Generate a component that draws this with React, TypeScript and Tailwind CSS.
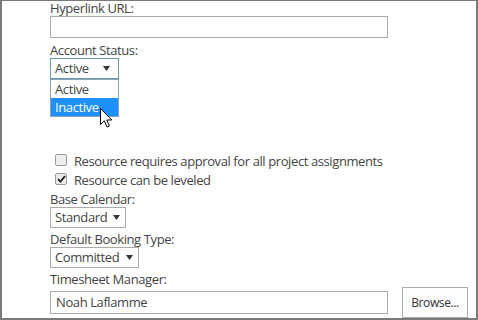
const Arrow = () => (
  <svg width="7" height="5" viewBox="0 0 7 5" className="shrink-0">
    <path d="M0 0 L7 0 L3.5 5 Z" fill="#333" />
  </svg>
);

function Select({ value, width }: { value: string; width: string }) {
  return (
    <div
      className={`flex items-center justify-between h-[21px] border border-[#ababab] bg-white pl-[4px] pr-[5px] ${width}`}
    >
      <span>{value}</span>
      <Arrow />
    </div>
  );
}

function Checkbox({ checked }: { checked?: boolean }) {
  return (
    <div className="mt-[1px] w-[12px] h-[12px] rounded-[2px] border border-[#9a9a9a] bg-[#ececec] flex items-center justify-center shrink-0">
      {checked && (
        <svg width="9" height="8" viewBox="0 0 9 8">
          <path d="M1 4.2 L3.4 6.6 L8 1.2" fill="none" stroke="#222" strokeWidth="1.9" />
        </svg>
      )}
    </div>
  );
}

export default function App() {
  return (
    <div className="w-[478px] h-[320px] bg-white border-x-2 border-b-2 border-t border-[#7a7a7a] overflow-hidden font-['Open_Sans',sans-serif] text-[13px] tracking-[-0.4px] text-[#444] leading-[15px]">
      <div className="pl-[48px] flex flex-col">
        <div className="h-[15px]">Hyperlink URL:</div>
        <div className="w-[338px] h-[22px] border border-[#ababab]" />

        <div className="mt-[5px] h-[15px]">Account Status:</div>
        <div className="relative w-[69px]">
          <div className="flex items-center justify-between h-[21px] border border-[#6f9aa5] bg-white pl-[4px] pr-[8px]">
            <span>Active</span>
            <Arrow />
          </div>
          <div className="absolute top-full left-0 w-[69px] h-[38px] border border-[#8aa3bd] bg-white flex flex-col z-10">
            <div className="h-[19px] pl-[4px] flex items-center">Active</div>
            <div className="h-[18px] pl-[4px] flex items-center bg-[#1e90ff] text-white">Inactive</div>
          </div>
          <svg
            className="absolute left-[50px] top-[50px] z-20"
            width="13"
            height="21"
            viewBox="0 0 13 21"
          >
            <path
              d="M0.5 0.5 L0.5 16.5 L4.3 12.8 L7 19 L9.4 18 L6.8 12 L11.8 12 Z"
              fill="#fff"
              stroke="#000"
              strokeWidth="1"
              strokeLinejoin="round"
            />
          </svg>
        </div>

        <div className="mt-[74px] h-[19px] flex items-start gap-[7px] pl-[5px]">
          <Checkbox />
          <span className="leading-[16px]">Resource requires approval for all project assignments</span>
        </div>
        <div className="h-[19px] flex items-start gap-[7px] pl-[5px]">
          <Checkbox checked />
          <span className="leading-[16px]">Resource can be leveled</span>
        </div>

        <div className="mt-[1px] h-[15px]">Base Calendar:</div>
        <Select value="Standard" width="w-[76px]" />

        <div className="mt-[4px] h-[15px]">Default Booking Type:</div>
        <Select value="Committed" width="w-[89px]" />

        <div className="mt-[4px] h-[15px]">Timesheet Manager:</div>
        <div className="flex items-center gap-[14px] h-[31px]">
          <div className="w-[338px] h-[23px] border border-[#ababab] flex items-center pl-[5px]">
            Noah Laflamme
          </div>
          <button className="w-[66px] h-[31px] border border-[#ababab] bg-[#fdfdfd] text-[12px] tracking-[-0.4px] text-[#333]">
            Browse...
          </button>
        </div>
      </div>
    </div>
  );
}
